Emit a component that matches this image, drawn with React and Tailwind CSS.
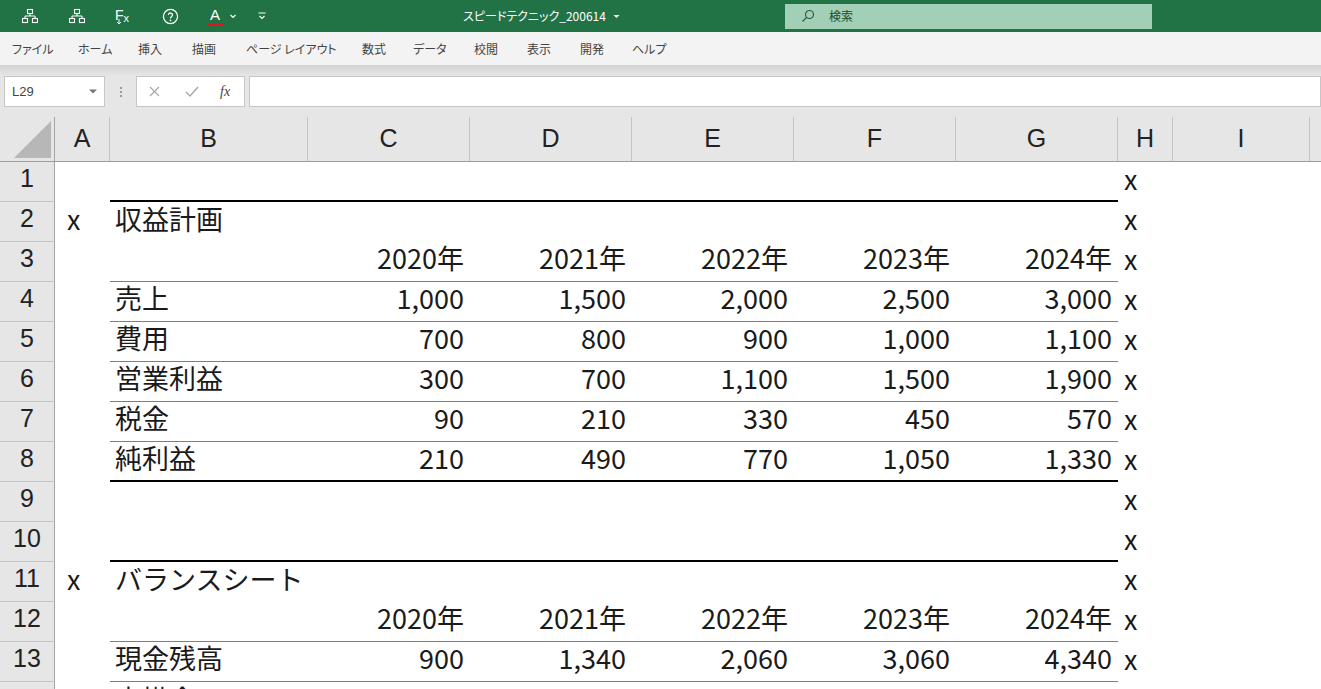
import React from "react";

const years = ["2020年", "2021年", "2022年", "2023年", "2024年"];

const rows = [
    { n: 1, h: "x", line: "thick" },
    { n: 2, a: "x", b: "収益計画", h: "x" },
    { n: 3, vals: years, h: "x", line: "thin" },
    { n: 4, b: "売上", vals: ["1,000", "1,500", "2,000", "2,500", "3,000"], h: "x", line: "thin" },
    { n: 5, b: "費用", vals: ["700", "800", "900", "1,000", "1,100"], h: "x", line: "thin" },
    { n: 6, b: "営業利益", vals: ["300", "700", "1,100", "1,500", "1,900"], h: "x", line: "thin" },
    { n: 7, b: "税金", vals: ["90", "210", "330", "450", "570"], h: "x", line: "thin" },
    { n: 8, b: "純利益", vals: ["210", "490", "770", "1,050", "1,330"], h: "x", line: "thick" },
    { n: 9, h: "x" },
    { n: 10, h: "x", line: "thick" },
    { n: 11, a: "x", b: "バランスシート", h: "x" },
    { n: 12, vals: years, h: "x", line: "thin" },
    { n: 13, b: "現金残高", vals: ["900", "1,340", "2,060", "3,060", "4,340"], h: "x", line: "thin" },
    { n: 14, b: "売掛金" },
];

const tabs = [
    ["ファイル", "w-[66px]"],
    ["ホーム", "w-[60px]"],
    ["挿入", "w-[54px]"],
    ["描画", "w-[54px]"],
    ["ページ レイアウト", "w-[116px]"],
    ["数式", "w-[51px]"],
    ["データ", "w-[61px]"],
    ["校閲", "w-[53px]"],
    ["表示", "w-[53px]"],
    ["開発", "w-[52px]"],
    ["ヘルプ", "w-[60px]"],
];

const cols = [
    ["A", "w-[55px]"],
    ["B", "w-[198px]"],
    ["C", "w-[162px]"],
    ["D", "w-[162px]"],
    ["E", "w-[162px]"],
    ["F", "w-[162px]"],
    ["G", "w-[162px]"],
    ["H", "w-[55px]"],
    ["I", "w-[137px]"],
];

function lineClass(line) {
    if (line === "thick") return "border-b-2 border-black";
    if (line === "thin") return "border-b border-[#7f7f7f]";
    return "";
}

function OrgIcon() {
    return (
        <svg width="16" height="16" viewBox="0 0 16 16" fill="none" stroke="white" strokeWidth="1.1">
            <rect x="5.5" y="1.5" width="5" height="4" />
            <path d="M8 5.5V8M3 8h10M3 8v2M13 8v2" />
            <rect x="0.5" y="10.5" width="5" height="4" />
            <rect x="10.5" y="10.5" width="5" height="4" />
        </svg>
    );
}

function TitleBar() {
    return (
        <div className="flex h-8 items-center bg-[#217346] text-white">
            <div className="flex w-[463px] items-center">
                <div className="ml-[22px]">
                    <OrgIcon />
                </div>
                <div className="ml-[31px]">
                    <OrgIcon />
                </div>
                <div className="relative ml-[30px] flex h-4 w-[18px] items-start font-['Liberation_Sans',sans-serif]">
                    <span className="text-[14px] leading-[14px]">F</span>
                    <span className="mt-[5px] text-[11px] leading-[11px]">x</span>
                    <svg className="absolute left-[1px] top-[11px]" width="6" height="6" viewBox="0 0 6 6" fill="none" stroke="white" strokeWidth="1">
                        <path d="M3 0v5M1 3l2 2 2-2" />
                    </svg>
                </div>
                <div className="ml-[29px]">
                    <svg width="17" height="17" viewBox="0 0 24 24" fill="none" stroke="white" strokeWidth="1.8" strokeLinecap="round">
                        <circle cx="12" cy="12" r="10" />
                        <path d="M9.1 9a3 3 0 0 1 5.8 1c0 2-2.9 2.5-2.9 4" />
                        <path d="M12 17.5h.01" strokeWidth="2.4" />
                    </svg>
                </div>
                <div className="ml-[28px] flex w-[16px] flex-col items-center">
                    <span className="font-['Liberation_Sans',sans-serif] text-[15px] leading-[15px]">A</span>
                    <span className="mt-[1px] h-[3px] w-[15px] bg-[#e81123]" />
                </div>
                <svg className="ml-[6px]" width="8" height="8" viewBox="0 0 8 8" fill="none" stroke="white" strokeWidth="1.2">
                    <path d="M1.5 3l2.5 2.5L6.5 3" />
                </svg>
                <svg className="ml-[20px]" width="10" height="10" viewBox="0 0 10 10" fill="none" stroke="white" strokeWidth="1.1">
                    <path d="M1.5 2h7M2.5 5l2.5 2.5L7.5 5" />
                </svg>
            </div>
            <div className="flex w-[322px] items-center font-['Noto_Sans_CJK_JP',sans-serif] text-[12px] [font-feature-settings:'palt']">
                <span>スピードテクニック_200614</span>
                <svg className="ml-[7px]" width="7" height="5" viewBox="0 0 7 5" fill="white">
                    <path d="M0.5 1h6L3.5 4z" />
                </svg>
            </div>
            <div className="flex h-[25px] w-[367px] items-center bg-[#a1d0b6] font-['Noto_Sans_CJK_JP',sans-serif] text-[12px] text-[#1e4a32]">
                <svg className="ml-[16px]" width="14" height="14" viewBox="0 0 14 14" fill="none" stroke="#2c5a40" strokeWidth="1.2">
                    <circle cx="8.5" cy="5.5" r="4" />
                    <path d="M5.6 8.4L1.5 12.5" />
                </svg>
                <span className="ml-[14px]">検索</span>
            </div>
        </div>
    );
}

function Ribbon() {
    return (
        <div className="flex h-[33px] items-center bg-[#f3f3f3] pl-[12px] font-['Noto_Sans_CJK_JP',sans-serif] text-[12px] text-[#444] [font-feature-settings:'palt']">
            {tabs.map(([t, w]) => (
                <div key={t} className={w}>
                    {t}
                </div>
            ))}
        </div>
    );
}

function FormulaBar() {
    return (
        <div className="bg-[#e6e6e6]">
            <div className="h-[11px] bg-linear-to-b from-[#d3d3d3] to-[#e6e6e6]" />
            <div className="flex h-[31px]">
                <div className="ml-[4px] flex w-[101px] items-center justify-between border border-[#c6c6c6] bg-white pl-[7px] pr-[7px] font-['Liberation_Sans',sans-serif] text-[13px] text-[#444]">
                    <span>L29</span>
                    <svg width="8" height="5" viewBox="0 0 8 5" fill="#777">
                        <path d="M0 0.5h8L4 4.5z" />
                    </svg>
                </div>
                <div className="flex w-[31px] flex-col items-center justify-center gap-[2px]">
                    <span className="h-[2px] w-[2px] bg-[#9a9a9a]" />
                    <span className="h-[2px] w-[2px] bg-[#9a9a9a]" />
                    <span className="h-[2px] w-[2px] bg-[#9a9a9a]" />
                </div>
                <div className="flex w-[109px] items-center border border-[#c6c6c6] bg-white">
                    <svg className="ml-[12px]" width="11" height="11" viewBox="0 0 11 11" stroke="#a8a8a8" strokeWidth="1.2">
                        <path d="M1 1l9 9M10 1l-9 9" />
                    </svg>
                    <svg className="ml-[25px]" width="14" height="11" viewBox="0 0 14 11" fill="none" stroke="#a8a8a8" strokeWidth="1.4">
                        <path d="M1 6l4 4 8-9" />
                    </svg>
                    <span className="ml-[21px] font-['Liberation_Serif',serif] text-[14px] italic text-[#444]">
                        fx
                    </span>
                </div>
                <div className="ml-[4px] flex-1 border border-[#c6c6c6] bg-white" />
            </div>
        </div>
    );
}

function ColumnHeaders() {
    return (
        <div className="flex h-[55px] border-b border-[#9e9e9e] bg-[#e6e6e6] pt-[10px] font-['Liberation_Sans',sans-serif] text-[25px] text-[#222]">
            <div className="flex w-[55px] shrink-0 items-end justify-end border-r border-[#a6a6a6] pb-[3px] pr-[3px]">
                <svg width="37" height="37" viewBox="0 0 37 37">
                    <path d="M37 0V37H0z" fill="#b7b7b7" />
                </svg>
            </div>
            {cols.map(([c, w]) => (
                <div
                    key={c}
                    className={`${w} flex shrink-0 items-center justify-center border-r border-[#c3c3c3]`}
                >
                    {c}
                </div>
            ))}
            <div className="flex-1" />
        </div>
    );
}

function Row({ r }) {
    const line = lineClass(r.line);
    const vals = r.vals || ["", "", "", "", ""];
    return (
        <div className="flex h-10 font-['Noto_Sans_CJK_JP',sans-serif] text-[27px] text-[#1a1a1a]">
            <div className="flex w-[55px] shrink-0 items-center justify-center border-b border-r border-[#c4c4c4] border-r-[#a6a6a6] bg-[#e6e6e6] pb-[5px] font-['Liberation_Sans',sans-serif] text-[25px] text-[#222]">
                {r.n}
            </div>
            <div className="flex w-[55px] shrink-0 items-center pb-[6px] pl-[12px]">{r.a}</div>
            <div className={`flex w-[198px] shrink-0 items-center pb-[6px] pl-[5px] ${line}`}>{r.b}</div>
            {vals.map((v, i) => (
                <div
                    key={i}
                    className={`flex w-[162px] shrink-0 items-center justify-end pb-[6px] pr-[6px] ${line}`}
                >
                    {v}
                </div>
            ))}
            <div className="flex w-[55px] shrink-0 items-center pb-[6px] pl-[6px]">{r.h}</div>
            <div className="flex-1" />
        </div>
    );
}

function App() {
    return (
        <div className="h-[689px] w-[1321px] overflow-hidden bg-white">
            <TitleBar />
            <Ribbon />
            <FormulaBar />
            <ColumnHeaders />
            {rows.map((r) => (
                <Row key={r.n} r={r} />
            ))}
        </div>
    );
}

export default App;
